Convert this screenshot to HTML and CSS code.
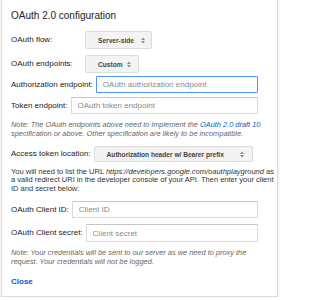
FILE: index.html
```html
<!DOCTYPE html>
<html lang="en">
<head>
<meta charset="utf-8">
<title>OAuth 2.0 configuration</title>
<link rel="stylesheet" href="styles.css">
</head>
<body>
<div class="dialog">
  <h2 class="title">OAuth 2.0 configuration</h2>

  <div class="row row-flow">
    <label class="label label-fixed">OAuth flow:</label>
    <div class="select select-flow">
      <span class="select-text">Server-side</span>
      <svg class="arrows" width="4" height="7" viewBox="0 0 4 7"><path d="M0 3 L2 0.5 L4 3 Z M0 4 L2 6.5 L4 4 Z"/></svg>
    </div>
  </div>

  <div class="row row-endpoints">
    <label class="label label-fixed">OAuth endpoints:</label>
    <div class="select select-custom">
      <span class="select-text">Custom</span>
      <svg class="arrows" width="4" height="7" viewBox="0 0 4 7"><path d="M0 3 L2 0.5 L4 3 Z M0 4 L2 6.5 L4 4 Z"/></svg>
    </div>
  </div>

  <div class="row row-auth">
    <label class="label">Authorization endpoint:</label>
    <input class="input input-focus" type="text" placeholder="OAuth authorization endpoint">
  </div>

  <div class="row row-token">
    <label class="label">Token endpoint:</label>
    <input class="input" type="text" placeholder="OAuth token endpoint">
  </div>

  <p class="note note-endpoints">Note: The OAuth endpoints above need to implement the <a class="link" href="#">OAuth 2.0 draft 10</a><br>specification or above. Other specification are likely to be incompatible.</p>

  <div class="row row-location">
    <label class="label">Access token location:</label>
    <div class="select select-location">
      <span class="select-text">Authorization header w/ Bearer prefix</span>
      <svg class="arrows" width="4" height="7" viewBox="0 0 4 7"><path d="M0 3 L2 0.5 L4 3 Z M0 4 L2 6.5 L4 4 Z"/></svg>
    </div>
  </div>

  <p class="info">You will need to list the URL <em>https://developers.google.com/oauthplayground</em> as<br>a valid redirect URI in the developer console of your API. Then enter your client<br>ID and secret below:</p>

  <div class="row row-client">
    <label class="label">OAuth Client ID:</label>
    <input class="input" type="text" placeholder="Client ID">
  </div>

  <div class="row row-secret">
    <label class="label">OAuth Client secret:</label>
    <input class="input" type="text" placeholder="Client secret">
  </div>

  <p class="note note-credentials">Note: Your credentials will be sent to our server as we need to proxy the<br>request. Your credentials will not be logged.</p>

  <a class="close" href="#">Close</a>
</div>
</body>
</html>
```

FILE: styles.css
```css
* {
  box-sizing: border-box;
}

body {
  margin: 0;
  background: #ffffff;
  font-family: "Liberation Sans", Arial, sans-serif;
  color: #222222;
}

.dialog {
  width: 277px;
  margin-left: 1px;
  padding: 10px 19px 9px 9px;
  background: #ffffff;
  border: 1px solid #dcdcdc;
  border-top: none;
  box-shadow: 0 1px 3px rgba(0, 0, 0, 0.12);
}

.title {
  margin: 0;
  font-size: 10px;
  line-height: 12px;
  font-weight: normal;
  color: #222222;
  white-space: nowrap;
}

.row {
  display: flex;
  align-items: center;
  gap: 3px;
}

.label {
  font-size: 8px;
  line-height: 10px;
  color: #222222;
  white-space: nowrap;
}

.label-fixed {
  width: 71px;
  flex: none;
}

.row-flow {
  margin-top: 9px;
  height: 18px;
}

.row-endpoints {
  margin-top: 6px;
  height: 18px;
}

.row-auth {
  margin-top: 3px;
  height: 17px;
}

.row-token {
  margin-top: 4px;
  height: 17px;
}

.row-location {
  margin-top: 8px;
  height: 16px;
}

.row-client {
  margin-top: 7.4px;
  height: 17px;
}

.row-secret {
  margin-top: 6px;
  height: 18px;
}

.select {
  display: flex;
  align-items: center;
  height: 100%;
  padding: 0 7px 0 12px;
  background: #f3f3f3;
  border: 1px solid #dcdcdc;
  border-radius: 2px;
}

.select-flow {
  width: 67px;
  padding-right: 6px;
}

.select-custom {
  width: 54px;
}

.select-location {
  width: 159px;
  padding-right: 8px;
}

.select-text {
  font-size: 6.6px;
  font-weight: bold;
  color: #444444;
  white-space: nowrap;
}

.arrows {
  margin-left: auto;
  flex: none;
  fill: #8a8a8a;
}

.input {
  flex: 1;
  min-width: 0;
  height: 100%;
  margin: 0;
  padding: 0 0 0 6px;
  font-family: "Liberation Sans", Arial, sans-serif;
  font-size: 8px;
  color: #222222;
  background: #ffffff;
  border: 1px solid #d9d9d9;
  border-top-color: #c6c6c6;
  border-radius: 1px;
  outline: none;
}

.input::placeholder {
  color: #8a8a8a;
}

.input-focus {
  border: 1px solid #4d90fe;
}

.note {
  margin: 0;
  font-size: 7.4px;
  line-height: 9px;
  font-style: italic;
  color: #666666;
  white-space: nowrap;
}

.note-endpoints {
  margin-top: 6px;
}

.note-credentials {
  margin-top: 5.5px;
}

.link {
  color: #1155cc;
  text-decoration: none;
}

.info {
  margin: 5.5px 0 0;
  font-size: 7.5px;
  line-height: 8.7px;
  color: #333333;
  white-space: nowrap;
}

.close {
  display: block;
  margin-top: 11.5px;
  font-size: 8px;
  line-height: 10px;
  font-weight: bold;
  color: #1155cc;
  text-decoration: none;
}
```
